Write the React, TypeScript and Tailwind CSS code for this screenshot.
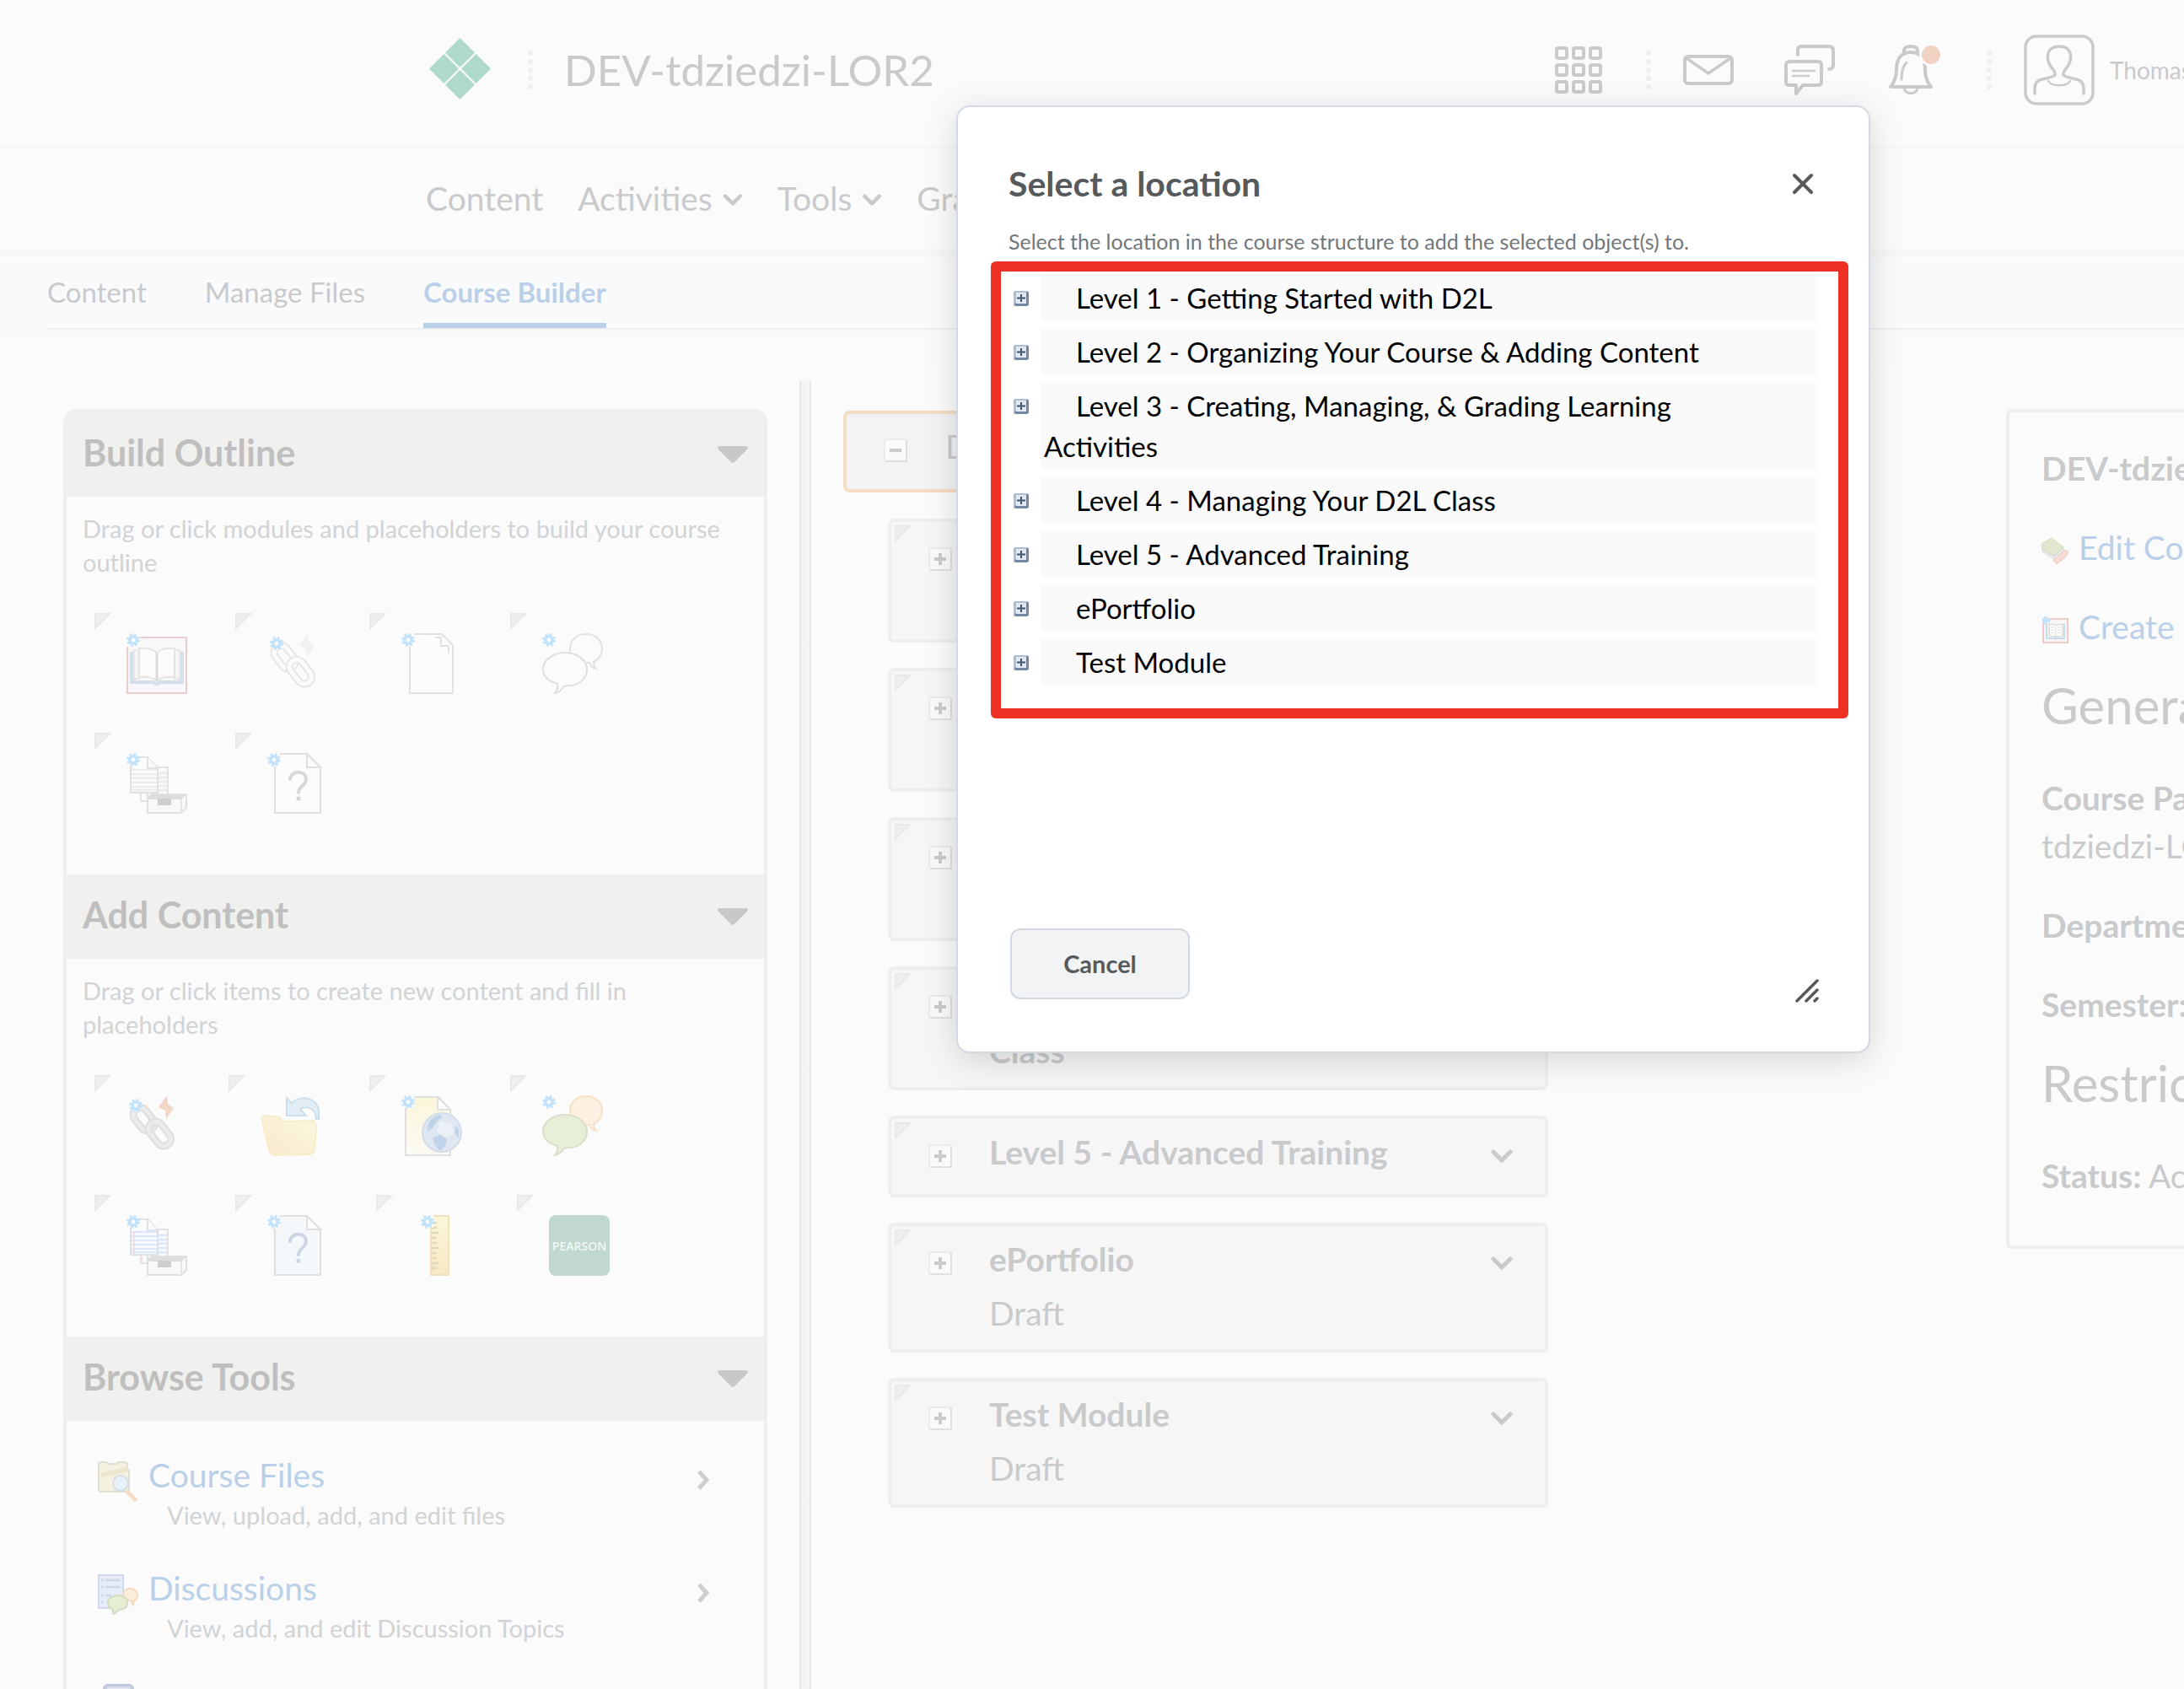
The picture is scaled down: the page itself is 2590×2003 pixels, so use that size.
import React from 'react';

type IconProps = { muted?: boolean };

function Gear({ x = 0, y = 0 }: { x?: number; y?: number }) {
  return (
    <g transform={`translate(${x} ${y})`}>
      <circle cx="8" cy="8" r="6.5" fill="none" stroke="#c3e2fb" strokeWidth="3" strokeDasharray="2.6 2.5" />
      <circle cx="8" cy="8" r="4.2" fill="#fbfbfb" stroke="#c3e2fb" strokeWidth="3.6" />
    </g>
  );
}

function BookIcon() {
  return (
    <svg viewBox="0 0 72 72" className="size-full">
      <rect x="1" y="5" width="70" height="66" fill="#f8f8fa" stroke="#edcccc" strokeWidth="2" />
      <path d="M4 22h7v34h22l3 3 3-3h22V22h7v38H41l-3 2h-4l-3-2H4z" fill="#d3dfea" />
      <path d="M9 20h6v34H9zM57 20h6v34h-6z" fill="#f5f5f5" stroke="#e8e8e8" strokeWidth="2" />
      <path d="M36 24c-3-5-9-7-21-6v34c12-1 18 1 21 5 3-4 9-6 21-5V18c-12-1-18 1-21 6z" fill="#fbfbfb" stroke="#e4e4e4" strokeWidth="2" />
      <path d="M36 24v32" stroke="#dadada" strokeWidth="3" />
      <rect x="0" y="0" width="16" height="16" fill="#fbfbfb" />
      <Gear />
    </svg>
  );
}

function LinkIcon({ muted }: IconProps) {
  const c = muted ? '#e6e6e6' : '#dedede';
  const inner = muted ? '#fbfbfb' : '#ebebeb';
  return (
    <svg viewBox="0 0 72 72" className="size-full">
      <g fill="none" strokeLinecap="round" strokeLinejoin="round">
        <rect x="6" y="20" width="30" height="17" rx="8.5" transform="rotate(52 21 28)" stroke={c} strokeWidth="9" />
        <rect x="6" y="20" width="30" height="17" rx="8.5" transform="rotate(52 21 28)" stroke={inner} strokeWidth="5" />
        <rect x="23" y="37" width="32" height="17" rx="8.5" transform="rotate(52 39 46)" stroke={c} strokeWidth="9" />
        <rect x="23" y="37" width="32" height="17" rx="8.5" transform="rotate(52 39 46)" stroke={inner} strokeWidth="5" />
      </g>
      <path d="M48 0l1 10 7 5-9 13-1-10-8-4z" fill={muted ? '#f0f0f0' : '#f2d6c8'} />
      <Gear x={3} y={4} />
    </svg>
  );
}

function PageIcon() {
  return (
    <svg viewBox="0 0 72 72" className="size-full">
      <path d="M10 1h38l13 13v57H10z" fill="#fcfcfc" stroke="#e2e2e2" strokeWidth="2" />
      <path d="M40 5h7v10h9v9" fill="none" stroke="#e2e2e2" strokeWidth="2" />
      <rect x="0" y="0" width="15" height="16" fill="#fbfbfb" />
      <Gear />
    </svg>
  );
}

function BubblesIcon({ muted }: IconProps) {
  return (
    <svg viewBox="0 0 72 72" className="size-full">
      <path
        d="M52 1c11 0 19 7 19 17 0 8-4 13-10 16 0 4 1 6 3 8-5-1-7-4-8-7-14 1-23-6-23-17C33 8 41 1 52 1z"
        fill={muted ? '#fbfbfb' : '#fbf0e2'}
        stroke={muted ? '#e2e2e2' : '#f6e0ca'}
        strokeWidth="2"
      />
      <path
        d="M27 23c15 0 26 9 26 20 0 10-8 18-20 19-5 0-8 1-9 3-2 3-4 5-9 6 3-3 4-6 3-11C8 57 1 51 1 43c0-11 11-20 26-20z"
        fill={muted ? '#fbfbfb' : '#e8efd9'}
        stroke={muted ? '#dfdfdf' : '#d8dfca'}
        strokeWidth="2"
      />
      <Gear />
    </svg>
  );
}

function DropboxIcon({ muted }: IconProps) {
  const line = muted ? '#ececec' : '#d9e8fa';
  return (
    <svg viewBox="0 0 72 72" className="size-full">
      <path d="M17 44v13h17V44z" fill="#fbfbfb" stroke="#e4e4e4" strokeWidth="2" />
      <path d="M25 17h24v40H25z" fill="#fbfbfb" stroke="#e2e2e2" strokeWidth="2" />
      <path d="M38 24h10M38 29h10M38 34h10M38 39h10M38 44h10" stroke={line} strokeWidth="3" />
      <path d="M5 5h20l12 13v29H5z" fill="#fcfcfc" stroke="#e0e0e0" strokeWidth="2" />
      <path d="M25 5v13h12" fill="#fbfbfb" stroke="#e0e0e0" strokeWidth="2" />
      <path d="M6 20h30M6 25h30M6 30h30M6 35h30M6 40h30M6 44h30" stroke={line} strokeWidth="2.6" />
      {!muted && <path d="M9 19v27M18 49v7" stroke="#f5d6d6" strokeWidth="1.5" />}
      <path d="M29 49h42v16l-6 6H25V55z" fill="#f8f8f8" stroke="#e0e0e0" strokeWidth="2" />
      <path d="M29 50h41l-5 5H25z" fill="#dddddd" />
      <path d="M37 54h16v8H37z" fill="#cfcfd1" />
      <path d="M65 55v16" stroke="#e4e4e4" strokeWidth="2" />
      <rect x="0" y="0" width="15" height="15" fill="#fbfbfb" />
      <Gear />
    </svg>
  );
}

function QuizIcon({ muted }: IconProps) {
  return (
    <svg viewBox="0 0 72 72" className="size-full">
      <path d="M9 1h38l16 16v54H9z" fill={muted ? '#fcfcfc' : '#f5f8fb'} stroke="#e0e0e0" strokeWidth="2" />
      <path d="M47 1v16h16z" fill="#fcfcfc" stroke="#e0e0e0" strokeWidth="2" />
      <path
        d="M27 31c1-11 19-11 19 0 0 8-9 8-9 16"
        fill="none"
        stroke={muted ? '#d8d8d8' : '#cdd5e4'}
        strokeWidth="4"
        strokeLinecap="round"
      />
      <circle cx="37" cy="54" r="2.6" fill={muted ? '#d4d4d4' : '#cdd5e4'} />
      <rect x="0" y="0" width="15" height="16" fill="#fbfbfb" />
      <Gear />
    </svg>
  );
}

function FolderIcon() {
  return (
    <svg viewBox="0 0 72 72" className="size-full">
      <defs>
        <linearGradient id="folder" x1="0" y1="1" x2="1" y2="0">
          <stop offset="0" stopColor="#fae9cc" />
          <stop offset="1" stopColor="#f9f8e0" />
        </linearGradient>
      </defs>
      <path d="M1 27l4-3 18 2 3 5 37-1 3 7-2 29-5 4-44 1-4-3z" fill="url(#folder)" stroke="#f5edca" strokeWidth="2" strokeLinejoin="round" />
      <path d="M31 3l6 6C49-2 69 4 69 19v9h-3c0-11-9-17-19-12l7 8H31z" fill="#e2ecf4" stroke="#cbdfed" strokeWidth="2" />
    </svg>
  );
}

function WebPageIcon() {
  return (
    <svg viewBox="0 0 72 72" className="size-full">
      <defs>
        <linearGradient id="sheet" x1="0" y1="0" x2="0" y2="1">
          <stop offset="0" stopColor="#fbf6da" />
          <stop offset="1" stopColor="#fbfaf4" />
        </linearGradient>
      </defs>
      <path d="M5 2h39l14 15v54H5z" fill="url(#sheet)" stroke="#dfdfdf" strokeWidth="2" />
      <path d="M43 2v15h15z" fill="#fcfcfc" stroke="#dfdfdf" strokeWidth="2" />
      <circle cx="48" cy="44" r="23" fill="#dfe7f3" stroke="#d4dcea" strokeWidth="2" />
      <path d="M31 37c2-8 8-13 15-14l3 3-7 5-5 8-6 4zM37 50l9-3 8 5-2 8-6 6-7-8zM64 36l4 4v10l-5-5z" fill="#bfd4e8" />
      <path d="M46 30l14 4 2 12-10 3-10-6z" fill="#ebf0f7" />
      <rect x="0" y="0" width="15" height="15" fill="#fbfbfb" />
      <Gear />
    </svg>
  );
}

function RulerIcon() {
  return (
    <svg viewBox="0 0 72 72" className="size-full">
      <defs>
        <linearGradient id="ruler" x1="0" y1="0" x2="0" y2="1">
          <stop offset="0" stopColor="#faf7d8" />
          <stop offset="1" stopColor="#f9e8c4" />
        </linearGradient>
      </defs>
      <rect x="27" y="1" width="21" height="70" fill="url(#ruler)" stroke="#efe2bc" strokeWidth="2" />
      <path d="M28 9h6M28 15h6M28 21h8M28 27h6M28 33h6M28 39h8M28 45h6M28 51h6M28 57h8M28 63h6" stroke="#e2d8bc" strokeWidth="2.5" />
      <rect x="15" y="0" width="15" height="15" fill="#fbfbfb" />
      <Gear x={15} />
    </svg>
  );
}

function PearsonIcon() {
  return (
    <span className="flex size-full items-center justify-center rounded-lg bg-[#c0d8cd] font-['Open_Sans',sans-serif] text-[14px] font-semibold text-[#f4f9f6]">
      PEARSON
    </span>
  );
}

function Grip() {
  return (
    <svg viewBox="0 0 20 20" className="size-5 shrink-0" aria-hidden="true">
      <path d="M1 1h17L1 18z" fill="#efefef" stroke="#e9e9e9" strokeWidth="2" />
    </svg>
  );
}

function Down({ className }: { className: string }) {
  return (
    <svg viewBox="0 0 26 16" className={className} fill="none" aria-hidden="true">
      <path d="M3 3l10 10L23 3" stroke="#c9cacc" strokeWidth="5" strokeLinecap="round" strokeLinejoin="round" />
    </svg>
  );
}

function Dots() {
  return (
    <svg viewBox="0 0 6 46" className="h-[46px] w-1.5 shrink-0" aria-hidden="true">
      {[3, 13, 23, 33, 43].map((y) => (
        <circle key={y} cx="3" cy={y} r="3" fill="#eeeff3" />
      ))}
    </svg>
  );
}

type Tile = { label: string; narrow?: boolean; icon: React.ReactNode };

const outlineTiles: Tile[] = [
  { label: 'Module', icon: <BookIcon /> },
  { label: 'Link placeholder', narrow: true, icon: <LinkIcon muted /> },
  { label: 'File placeholder', icon: <PageIcon /> },
  { label: 'Discussion placeholder', icon: <BubblesIcon muted /> },
  { label: 'Dropbox placeholder', icon: <DropboxIcon muted /> },
  { label: 'Quiz placeholder', icon: <QuizIcon muted /> },
];

const contentTiles: Tile[] = [
  { label: 'Link', narrow: true, icon: <LinkIcon /> },
  { label: 'Course file', icon: <FolderIcon /> },
  { label: 'Create file', icon: <WebPageIcon /> },
  { label: 'Discussion', icon: <BubblesIcon /> },
  { label: 'Dropbox', icon: <DropboxIcon /> },
  { label: 'Quiz', icon: <QuizIcon /> },
  { label: 'Grade item', icon: <RulerIcon /> },
  { label: 'Pearson', icon: <PearsonIcon /> },
];

function PanelHeader({ title }: { title: string }) {
  return (
    <button type="button" className="flex h-[100px] w-full items-center justify-between bg-[#f0f0ee] px-[19px]">
      <h2 className="pb-1 text-[43px] leading-[50px] font-bold text-[#bfbfbf]">{title}</h2>
      <svg viewBox="0 0 36 20" className="h-5 w-9" aria-hidden="true">
        <path d="M2 0h32q3 1 1 4L20 19q-2 2-4 0L1 4Q-1 1 2 0z" fill="#c7c8ca" />
      </svg>
    </button>
  );
}

function TilePanel({ title, text, tiles }: { title: string; text: string; tiles: Tile[] }) {
  return (
    <section>
      <PanelHeader title={title} />
      <div className="pt-[18px] pb-[26px]">
        <p className="px-[19px] text-[29px] leading-[40px] text-[#d1d3d5]">{text}</p>
        <div className="mt-10 mr-[120px] ml-[33px] flex flex-wrap">
          {tiles.map((t) => (
            <button
              key={t.label}
              type="button"
              aria-label={t.label}
              className={t.narrow ? 'flex h-[142px] w-[159px] items-start' : 'flex h-[142px] w-[167px] items-start'}
            >
              <Grip />
              <span className="mt-6 ml-[18px] block size-[72px]">{t.icon}</span>
            </button>
          ))}
        </div>
      </div>
    </section>
  );
}

function FilesIcon() {
  return (
    <svg viewBox="0 0 48 48" className="size-full">
      <path d="M1 2l3-1h6l2 2h10l2-2h8l3 2v6l2 2v23l-3 2H3l-2-2z" fill="#f4f1e0" stroke="#e0dfd2" strokeWidth="2" />
      <path d="M4 14L36 6v6L4 19z" fill="#ebe6cd" />
      <path d="M34 35l12 12" stroke="#f6dcc6" strokeWidth="5" />
      <circle cx="27" cy="26" r="9" fill="#e6f1f9" stroke="#d6dce2" strokeWidth="2" />
    </svg>
  );
}

function DiscussionsIcon() {
  return (
    <svg viewBox="0 0 48 48" className="size-full">
      <rect x="1" y="1" width="29" height="39" fill="#e6edf8" stroke="#d0daec" strokeWidth="2" />
      <path d="M4 7h3M10 7h16M4 15h3M10 15h16M4 25h3M10 25h6M4 33h3" stroke="#cbd6ea" strokeWidth="2.4" />
      <path d="M38 17c5 0 9 3 9 7s-2 6-4 7l-1 5-3-5c-6 0-9-3-9-7s3-7 8-7z" fill="#fbeedd" stroke="#f6d9bf" strokeWidth="2" />
      <path d="M24 25c7 0 11 4 11 9s-4 8-10 8l-7 6v-6c-4-2-6-5-6-8 0-5 5-9 12-9z" fill="#e6efd2" stroke="#d3dcc0" strokeWidth="2" />
    </svg>
  );
}

function DatabaseIcon() {
  return (
    <svg viewBox="0 0 48 48" className="size-full">
      <rect x="7" y="1" width="35" height="44" rx="5" fill="#c9d1e4" stroke="#bcc5da" strokeWidth="2" />
      <path d="M11 5h27" stroke="#dfe4ef" strokeWidth="2" />
    </svg>
  );
}

const tools = [
  { name: 'Course Files', text: 'View, upload, add, and edit files', icon: <FilesIcon /> },
  { name: 'Discussions', text: 'View, add, and edit Discussion Topics', icon: <DiscussionsIcon /> },
];

function Toggle({ minus }: { minus?: boolean }) {
  return (
    <button type="button" aria-label={minus ? 'Collapse' : 'Expand'} className="mt-[19px] ml-[44px] size-7 shrink-0">
      <svg viewBox="0 0 28 28" className="size-full">
        <rect x="1" y="1" width="26" height="26" rx="1" fill="#f9fafc" stroke="#ebebed" strokeWidth="2" />
        <path d="M2 27h25V2" fill="none" stroke="#dfdfe1" strokeWidth="2" />
        <path d={minus ? 'M7 14h14' : 'M7 14h14M14 7v14'} stroke="#cbcbcd" strokeWidth="4" />
      </svg>
    </button>
  );
}

const modules = [
  { lines: ['Level 1 - Getting Started with', 'D2L'] },
  { lines: ['Level 2 - Organizing Your', 'Course & Adding Content'] },
  { lines: ['Level 3 - Creating, Managing,', '& Grading Learning Activities'] },
  { lines: ['Level 4 - Managing Your D2L', 'Class'] },
  { lines: ['Level 5 - Advanced Training'] },
  { lines: ['ePortfolio'], draft: true },
  { lines: ['Test Module'], draft: true },
];

const locations = [
  'Level 1 - Getting Started with D2L',
  'Level 2 - Organizing Your Course & Adding Content',
  'Level 3 - Creating, Managing, & Grading Learning Activities',
  'Level 4 - Managing Your D2L Class',
  'Level 5 - Advanced Training',
  'ePortfolio',
  'Test Module',
];

function Header() {
  const s = { fill: 'none', stroke: '#c9cacc', strokeLinecap: 'round', strokeLinejoin: 'round' } as const;
  return (
    <header className="flex h-[175px] items-center border-b-2 border-[#f4f5f6] pb-[7px] pl-[509px]">
      <a href="#home" aria-label="Home" className="mb-1 block size-[73px] shrink-0">
        <svg viewBox="0 0 73 73" className="size-full" fill="#afdacb">
          <path d="M36.500 0L54 17.500 36.500 35 19 17.500zM36.500 38L54 55.500 36.500 73 19 55.500zM17.500 19L35 36.500 17.500 54 0 36.500zM55.500 19L73 36.500 55.500 54 38 36.500z" />
        </svg>
      </a>
      <div className="ml-11">
        <Dots />
      </div>
      <h1 className="ml-[37px] text-[51px] leading-[64px] whitespace-nowrap text-[#c9cacc]">DEV-tdziedzi-LOR2</h1>
      <div className="ml-auto flex items-center">
        <button type="button" aria-label="Select a course" className="h-14 w-14">
          <svg viewBox="0 0 56 56" className="size-full" {...s} strokeWidth="4">
            {[2, 22, 42].map((y) => [2, 22, 42].map((x) => <rect key={`${x}-${y}`} x={x} y={y} width="12" height="12" rx="2" />))}
          </svg>
        </button>
        <div className="ml-[52px]">
          <Dots />
        </div>
        <button type="button" aria-label="Messages" className="ml-[38px] h-9 w-[60px]">
          <svg viewBox="0 0 60 36" className="size-full" {...s} strokeWidth="4">
            <rect x="2" y="2" width="56" height="32" rx="4" />
            <path d="M4 4l26 18L56 4" strokeWidth="3.500" />
          </svg>
        </button>
        <button type="button" aria-label="Subscriptions" className="ml-[60px] size-[60px]">
          <svg viewBox="0 0 60 60" className="size-full" {...s} strokeWidth="4">
            <path d="M16 12V6q0-4 4-4h33q5 0 5 5v17q0 5-5 5" />
            <path d="M6 20h34q4 0 4 4v20q0 4-4 4H22l-8 10V48H6q-4 0-4-4V24q0-4 4-4z" />
            <path d="M10 31h26M10 37h19" strokeWidth="2.500" />
          </svg>
        </button>
        <button type="button" aria-label="Notifications" className="ml-16 h-[60px] w-16">
          <svg viewBox="0 0 64 60" className="size-full" {...s} strokeWidth="4">
            <path d="M18 10V7q0-5 8-5t8 5v3M26 9c-12 0-17 9-17 21 0 8-2 14-7 20h48c-5-6-7-12-7-20 0-12-5-21-17-21z" />
            <path d="M18 51c1 9 15 9 16 0M21 21c-4 4-6 10-6 20" strokeWidth="3" />
            <circle cx="49" cy="12" r="13" fill="#fbfbfb" stroke="none" />
            <circle cx="50" cy="12" r="11" fill="#f0d3c3" stroke="none" />
          </svg>
        </button>
        <div className="ml-[52px]">
          <Dots />
        </div>
        <button type="button" className="ml-[38px] flex items-center">
          <svg viewBox="0 0 84 84" className="size-[84px] shrink-0" {...s} strokeWidth="3.500" aria-hidden="true">
            <rect x="2" y="2" width="80" height="80" rx="13" />
            <path d="M13 70v-6c0-6 3-10 9-11 8-2 14-3 15-5 1-4-2-6-5-10-7-12-4-24 10-24s17 12 10 24c-3 4-6 6-5 10 1 2 7 3 15 5 6 1 9 5 9 11v6" />
            <path d="M29 55c4 7 22 7 26 0" strokeWidth="2.500" />
          </svg>
          <span className="ml-[18px] w-[88px] text-left text-[28px] leading-[40px] whitespace-nowrap text-[#c9cacc]">Thomas</span>
        </button>
      </div>
    </header>
  );
}

function CourseInfo() {
  return (
    <aside className="mt-[94px] ml-auto w-[211px] self-start overflow-hidden rounded-l-lg border-4 border-r-0 border-[#eeeeee] bg-[#fbfbfb] pt-[38px] pb-[54px] pl-[38px] text-[39px] leading-[57px] whitespace-nowrap text-[#c9cacc]">
      <h2 className="font-bold">DEV-tdziedzi-LOR2</h2>
      <a href="#edit" className="mt-[37px] flex items-center text-[#bad0e9]">
        <svg viewBox="0 0 32 32" className="mt-1.5 mr-3 size-8 shrink-0" aria-hidden="true">
          <path d="M0 8L12 1l14 11-11 10L1 14z" fill="#e2e8cf" stroke="#d3dabf" />
          <path d="M1 14l14 9 11-10v4L15 26 1 17z" fill="#eeeeee" stroke="#d6d6d6" />
          <path d="M14 27l11-9 4-3 3 3-4 6-10 8z" fill="#f5ddd0" stroke="#e8c4c4" />
        </svg>
        Edit Course
      </a>
      <a href="#create" className="mt-[37px] flex items-center text-[#bad0e9]">
        <svg viewBox="0 0 32 32" className="mt-1.5 mr-3 size-8 shrink-0" aria-hidden="true">
          <rect x="2" y="3" width="29" height="28" fill="#f6f6f8" stroke="#f0c9c9" strokeWidth="2" />
          <path d="M6 9v17h10l1 1 1-1h9V9" fill="none" stroke="#c9dcee" strokeWidth="2" />
          <path d="M17 10l-8-1v14l8 1 8-1V9z" fill="#fdfdfd" stroke="#dcdcdc" strokeWidth="1.500" />
          <path d="M17 10v14M11 13h4M11 16h4M11 19h4M19 13h4M19 16h4M19 19h4" stroke="#dcdcdc" />
          <path d="M1 5h9M5 0v10" stroke="#c3e2fb" strokeWidth="4" />
        </svg>
        Create Module
      </a>
      <h3 className="mt-6 text-[60px] leading-[80px]">General</h3>
      <p className="mt-[42px]">
        <b>Course Path:</b>
        <br />
        tdziedzi-LOR2
      </p>
      <p className="mt-[37px] font-bold">Department:</p>
      <p className="mt-[37px] font-bold">Semester:</p>
      <h3 className="mt-6 text-[60px] leading-[80px]">Restrictions</h3>
      <p className="mt-[42px]">
        <b>Status:</b> Active
      </p>
    </aside>
  );
}

function LocationDialog() {
  return (
    <div
      role="dialog"
      aria-labelledby="dialog-title"
      className="absolute top-[125px] left-[1134px] flex h-[1124px] w-[1084px] flex-col rounded-2xl border-2 border-[#d3d9e3] bg-white pt-[67px] pb-[58px] shadow-[0_8px_40px_rgba(0,0,0,0.15)]"
    >
      <div className="flex items-center justify-between pr-[65px] pl-[60px]">
        <h2 id="dialog-title" className="text-[41px] leading-[48px] font-bold text-[#565a5c]">
          Select a location
        </h2>
        <button type="button" aria-label="Close" className="size-[26px]">
          <svg viewBox="0 0 26 26" className="size-full">
            <path d="M3 3l20 20M23 3L3 23" stroke="#565a5c" strokeWidth="4" strokeLinecap="round" />
          </svg>
        </button>
      </div>
      <p className="mt-[26px] pl-[60px] text-[25px] leading-[36px] text-[#72777a]">
        Select the location in the course structure to add the selected object(s) to.
      </p>
      <div className="mt-1.5 mr-6 ml-[39px] rounded-md bg-[#ee3124] p-3">
        <ul className="flex flex-col gap-2 bg-white pt-[3px] pr-6 pb-[27px] pl-[14px] text-[33px] leading-[48px] text-black">
          {locations.map((name) => (
            <li key={name} className="flex items-start">
              <button type="button" aria-label={`Expand ${name}`} className="mt-[19px] size-5 shrink-0">
                <svg viewBox="0 0 20 20" className="size-full">
                  <rect x="1" y="1" width="18" height="18" rx="3" fill="#7486a0" />
                  <path d="M1 18V4q0-3 3-3h14l-3 3H4v11z" fill="#b4bfcd" />
                  <rect x="4" y="3" width="12" height="13" fill="#e3e8f3" />
                  <path d="M5 9.500h10M10 5v9" stroke="#43566e" strokeWidth="2" />
                </svg>
              </button>
              <a href="#location" className="ml-[13px] flex-1 bg-[#fafafa] py-1 pr-20 pl-1 indent-[38px]">
                {name}
              </a>
            </li>
          ))}
        </ul>
      </div>
      <div className="mt-auto flex items-end justify-between pr-[59px] pl-[62px]">
        <button
          type="button"
          className="mb-1 h-[84px] w-[213px] rounded-xl border-2 border-[#d3d9e3] bg-[#f1f3f5] text-[29px] leading-[40px] font-bold text-[#565a5c]"
        >
          Cancel
        </button>
        <svg viewBox="0 0 28 28" className="size-7" aria-hidden="true">
          <path d="M2 26L26 2M13 26l13-13M23 26l3-3" stroke="#565a5c" strokeWidth="3.500" strokeLinecap="round" />
        </svg>
      </div>
    </div>
  );
}

export default function App() {
  return (
    <div className="relative flex h-screen flex-col overflow-hidden bg-[#fbfbfb] font-['Lato',sans-serif]">
      <Header />
      <nav className="flex h-[122px] items-center gap-[41px] border-b-2 border-[#f5f6f7] pl-[505px] text-[39px] leading-[57px] text-[#c9cacc]">
        <a href="#content">Content</a>
        <button type="button" className="flex items-center gap-3">
          Activities
          <Down className="mt-1 h-3.5 w-6" />
        </button>
        <button type="button" className="flex items-center gap-3">
          Tools
          <Down className="mt-1 h-3.5 w-6" />
        </button>
        <a href="#grades">Grades</a>
      </nav>
      <div className="flex min-h-0 flex-1 flex-col bg-[linear-gradient(#f9fafb,#fbfbfb_220px)]">
        <div className="h-2 shrink-0 bg-[#f7f7f7]" />
        <div className="ml-14 flex shrink-0 gap-[69px] border-b-2 border-[#eeeff3] pt-[17px] text-[33px] leading-[48px] text-[#c9cacc]">
          <a href="#content-tab" className="pb-[19px]">
            Content
          </a>
          <a href="#files-tab" className="pb-[19px]">
            Manage Files
          </a>
          <a href="#builder-tab" className="border-b-6 border-[#bad0e9] pb-[13px] font-bold text-[#bad0e9]">
            Course Builder
          </a>
        </div>
        <main className="flex min-h-0 flex-1">
          <div className="mt-[94px] ml-[75px] w-[835px] shrink-0 overflow-hidden rounded-t-2xl border-4 border-b-0 border-[#eeeeee] bg-[#fbfbfb]">
            <TilePanel title="Build Outline" text="Drag or click modules and placeholders to build your course outline" tiles={outlineTiles} />
            <TilePanel title="Add Content" text="Drag or click items to create new content and fill in placeholders" tiles={contentTiles} />
            <section>
              <PanelHeader title="Browse Tools" />
              <ul className="flex flex-col gap-[38px] pt-9">
                {tools.map((t) => (
                  <li key={t.name} className="pr-16 pl-[37px]">
                    <a href="#tool" className="flex items-center text-[39px] leading-[56px] text-[#bad0e9]">
                      <span className="mt-3 mr-3 -mb-1 block size-12">{t.icon}</span>
                      {t.name}
                      <svg viewBox="0 0 16 26" className="mt-3 ml-auto h-[26px] w-4" fill="none" aria-hidden="true">
                        <path d="M3 3l9 10-9 10" stroke="#cdcecf" strokeWidth="5" />
                      </svg>
                    </a>
                    <p className="pl-[82px] text-[29px] leading-[40px] text-[#d1d3d5]">{t.text}</p>
                  </li>
                ))}
                <li className="pl-[37px]">
                  <a href="#tool" aria-label="Dropbox" className="mt-2 block size-12">
                    <DatabaseIcon />
                  </a>
                </li>
              </ul>
            </section>
          </div>
          <div className="mt-[60px] ml-[38px] w-3.5 shrink-0 border-x-2 border-[#e8e8e8] bg-linear-to-r from-[#f3f3f3] to-[#f7f7f7]" />
          <div className="ml-[38px] w-[836px] shrink-0 pt-24 text-[39px] leading-[57px] text-[#c9cacc]">
            <div className="mb-[31px] flex min-h-[97px] items-start rounded-lg border-4 border-[#f5dcc4] bg-[#f3f3f3] pt-2.5">
              <Toggle minus />
              <h2 className="ml-[45px]">DEV-tdziedzi-LOR2</h2>
            </div>
            <ul className="ml-[53px] flex flex-col gap-[30px]">
              {modules.map((m) => (
                <li
                  key={m.lines[0]}
                  className="relative flex min-h-[97px] items-start rounded-lg border-4 border-[#eeeeee] bg-[#f6f6f6] pt-[11px] pr-[38px] pb-3.5"
                >
                  <span className="absolute top-1 left-1">
                    <Grip />
                  </span>
                  <Toggle />
                  <div className="ml-[44px] flex-1">
                    <h3 className="font-bold">
                      {m.lines.map((l) => (
                        <span key={l} className="block">
                          {l}
                        </span>
                      ))}
                    </h3>
                    {m.draft && <p className="mt-[7px]">Draft</p>}
                  </div>
                  <button type="button" aria-label={`Options for ${m.lines[0]}`} className="mt-[25px] h-4 w-[26px]">
                    <Down className="size-full" />
                  </button>
                </li>
              ))}
            </ul>
          </div>
          <CourseInfo />
        </main>
      </div>
      <LocationDialog />
    </div>
  );
}
